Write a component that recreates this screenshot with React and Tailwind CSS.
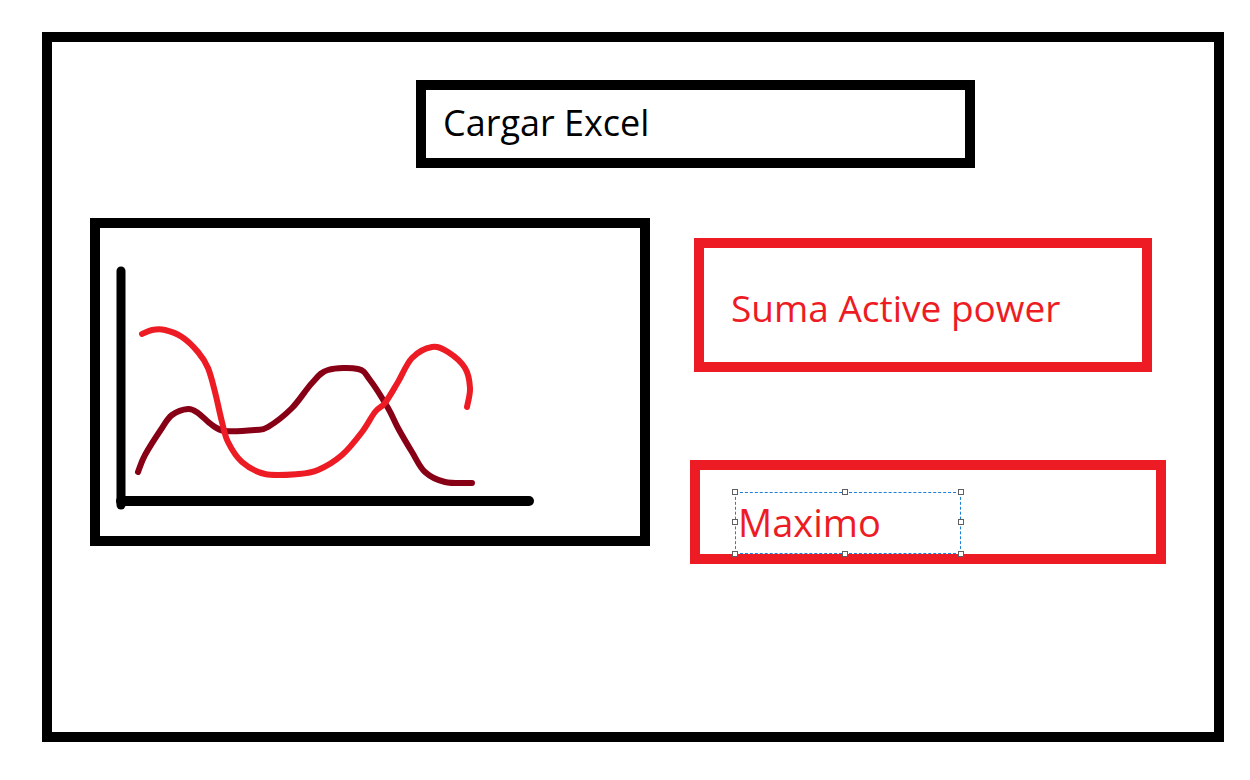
import React from 'react';

const RED = '#ed1c24';
const DARK_RED = '#880015';

// page coordinates, the chart viewBox uses them directly
const redLine = [
  [142, 334], [152, 330], [165, 330], [182, 337], [198, 352], [208, 368], [215, 392],
  [222, 422], [228, 442], [242, 462], [265, 474], [298, 474], [318, 470], [342, 455],
  [362, 432], [375, 412], [385, 403], [398, 382], [412, 358], [432, 347], [448, 352],
  [465, 368], [470, 388], [467, 407],
];

const darkLine = [
  [138, 472], [145, 455], [162, 428], [172, 415], [188, 409], [198, 413], [212, 425],
  [225, 431], [255, 430], [268, 427], [292, 408], [312, 383], [328, 370], [358, 369],
  [370, 380], [388, 408], [398, 428], [412, 452], [425, 472], [445, 482],
  [472, 483],
];

// catmull-rom through the points so the brush strokes look hand drawn
const smoothPath = (pts) => {
  let d = `M${pts[0][0]},${pts[0][1]}`;
  for (let i = 0; i < pts.length - 1; i++) {
    const p0 = pts[i - 1] || pts[i];
    const p1 = pts[i];
    const p2 = pts[i + 1];
    const p3 = pts[i + 2] || p2;
    const c1x = p1[0] + (p2[0] - p0[0]) / 6;
    const c1y = p1[1] + (p2[1] - p0[1]) / 6;
    const c2x = p2[0] - (p3[0] - p1[0]) / 6;
    const c2y = p2[1] - (p3[1] - p1[1]) / 6;
    d += ` C${c1x},${c1y} ${c2x},${c2y} ${p2[0]},${p2[1]}`;
  }
  return d;
};

const Handle = ({ className }) => (
  <span className={`absolute w-[6px] h-[6px] border border-[#5f5f5f] bg-white ${className}`} />
);

const Chart = () => (
  <div className="ml-[38px] w-[560px] h-[328px] border-[10px] border-black shrink-0">
    <svg className="w-full h-full block" viewBox="100 228 540 308">
      <line x1="121" y1="271" x2="121" y2="505" stroke="#000" strokeWidth="9" strokeLinecap="round" />
      <line x1="121" y1="501" x2="529" y2="501" stroke="#000" strokeWidth="10" strokeLinecap="round" />
      <path d={smoothPath(darkLine)} fill="none" stroke={DARK_RED} strokeWidth="6" strokeLinecap="round" />
      <path d={smoothPath(redLine)} fill="none" stroke={RED} strokeWidth="6" strokeLinecap="round" />
    </svg>
  </div>
);

export default function App() {
  return (
    <div className="w-[1250px] h-[780px] bg-white pt-[32px] pl-[42px] font-['Open_Sans',sans-serif]">
      <div className="w-[1182px] h-[710px] border-[10px] border-black">
        {/* upload button */}
        <div className="ml-[364px] mt-[38px] w-[559px] h-[88px] border-[10px] border-black pl-[17px] pt-[15px]">
          <span className="block text-[36px] leading-none text-black">Cargar Excel</span>
        </div>

        <div className="mt-[50px] flex items-start">
          <Chart />

          <div className="ml-[40px] flex flex-col">
            <div className="ml-[4px] mt-[20px] w-[458px] h-[134px] border-[10px] border-[#ed1c24] pl-[27px] pt-[41px]">
              <span className="block text-[37px] leading-none text-[#ed1c24]">Suma Active power</span>
            </div>

            <div className="mt-[88px] w-[476px] h-[104px] border-[10px] border-[#ed1c24]">
              {/* text box still selected, as in Paint */}
              <div className="relative ml-[35px] mt-[22px] w-[226px] h-[62px] border border-dashed border-[#1e7fd6] pl-[2px] pt-[10px]">
                <span className="block text-[38px] leading-none text-[#ed1c24]">Maximo</span>
                <Handle className="-left-[4px] -top-[4px]" />
                <Handle className="left-[106px] -top-[4px]" />
                <Handle className="-right-[4px] -top-[4px]" />
                <Handle className="-left-[4px] top-[26px]" />
                <Handle className="-right-[4px] top-[26px]" />
                <Handle className="-left-[4px] -bottom-[4px]" />
                <Handle className="left-[106px] -bottom-[4px]" />
                <Handle className="-right-[4px] -bottom-[4px]" />
              </div>
            </div>
          </div>
        </div>
      </div>
    </div>
  );
}
